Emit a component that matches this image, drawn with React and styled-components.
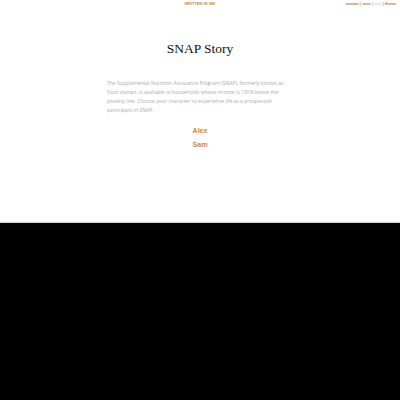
import React from 'react';
import styled, { createGlobalStyle } from 'styled-components';

const GlobalStyle = createGlobalStyle`
  html, body {
    margin: 0;
    padding: 0;
    background: #000;
  }
`;

const Page = styled.div`
  background: #fff;
  height: 223px;
  box-sizing: border-box;
  border-bottom: 1px solid #d8d8d8;
  box-shadow: inset 0 -5px 0 -4px #f3f3f3;
  display: flex;
  flex-direction: column;
`;

const TopBar = styled.div`
  display: grid;
  grid-template-columns: 1fr auto 1fr;
  align-items: center;
  height: 8px;
  padding: 0 4px;
  font-family: "Liberation Sans", Arial, sans-serif;
  font-weight: bold;
  font-size: 3.8px;
`;

const Written = styled.div`
  grid-column: 2;
  color: #c08a3e;
  letter-spacing: 0.1px;
`;

const Links = styled.div`
  justify-self: end;
  color: #b07a35;
`;

const Link = styled.span`
  color: ${p => (p.$disabled ? '#d9d9d9' : '#b07a35')};
`;

const Sep = styled.span`
  color: #999;
`;

const Story = styled.div`
  width: 186px;
  margin: 0 auto;
  padding-top: 31px;
  display: flex;
  flex-direction: column;
`;

const Title = styled.h1`
  margin: 0 0 20px;
  text-align: center;
  font-family: "Liberation Serif", "DejaVu Serif", serif;
  font-weight: normal;
  font-size: 13.5px;
  line-height: 20px;
  color: #111;
`;

const Para = styled.p`
  margin: 0 0 9px;
  font-family: "Open Sans", sans-serif;
  font-size: 5.05px;
  line-height: 9px;
  color: #ababab;
`;

const Choice = styled.a`
  display: block;
  text-align: center;
  font-family: "Liberation Sans", Arial, sans-serif;
  font-weight: bold;
  font-size: 7px;
  line-height: 14px;
  color: #c08a3e;
  text-decoration: none;
`;

export default function App() {
  return (
    <>
      <GlobalStyle />
      <Page>
        <TopBar>
          <Written>WRITTEN IN INK</Written>
          <Links>
            <Link>contact</Link> <Sep>|</Sep> <Link>save</Link> <Sep>|</Sep>{' '}
            <Link $disabled>load</Link> <Sep>|</Sep> <Link>theme</Link>
          </Links>
        </TopBar>
        <Story>
          <Title>SNAP Story</Title>
          <Para>
            The Supplemental Nutrition Assistance Program (SNAP), formerly known as
            food stamps, is available to households whose income is 130% below the
            poverty line. Choose your character to experience life as a prospective
            participant in SNAP.
          </Para>
          <Choice>Alex</Choice>
          <Choice>Sam</Choice>
        </Story>
      </Page>
    </>
  );
}
